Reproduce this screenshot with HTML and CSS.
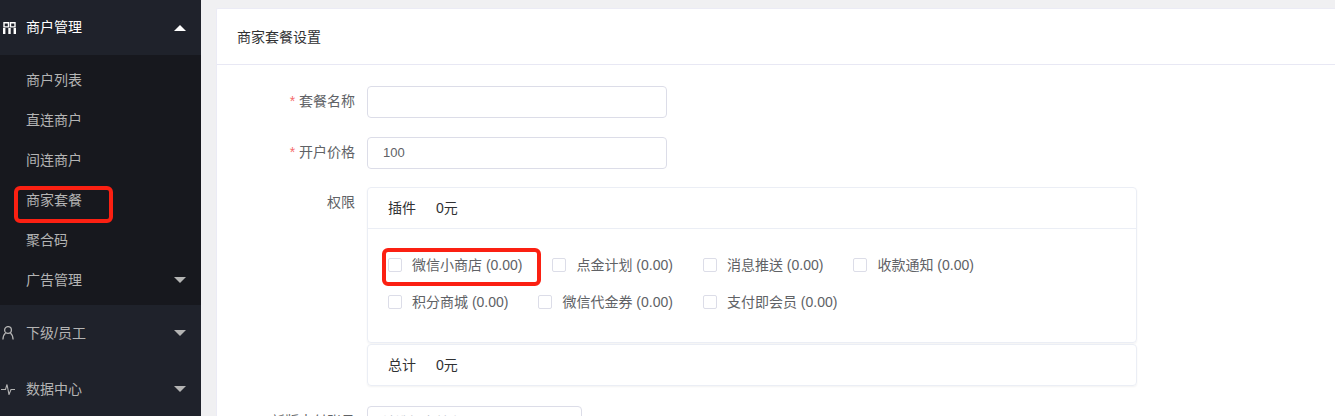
FILE: index.html
```html
<!DOCTYPE html>
<html lang="zh-CN">

<head>
  <meta charset="UTF-8">
  <title>商家套餐设置</title>
  <link rel="stylesheet" href="styles.css">
</head>

<body>
  <div id="sidebar">
    <div class="menu-head open">
      <svg class="menu-icon grid" viewBox="0 0 13 12" width="13" height="12">
        <path d="M1 .7h4.5v4.2H1zM7.5 .7H12v4.2H7.5z" fill="none" stroke="currentColor" stroke-width="1.4" />
        <path d="M1.2 6v6M6.5 6v6M11.8 6v6" fill="none" stroke="currentColor" stroke-width="2.4" />
      </svg>
      <span>商户管理</span>
      <i class="arrow up"></i>
    </div>
    <div class="submenu">
      <div class="menu-item">商户列表</div>
      <div class="menu-item">直连商户</div>
      <div class="menu-item">间连商户</div>
      <div class="menu-item">商家套餐<b class="mark mark-side"></b></div>
      <div class="menu-item">聚合码</div>
      <div class="menu-item">广告管理<i class="arrow"></i></div>
    </div>
    <div class="menu-head tall">
      <svg class="menu-icon person" viewBox="0 0 12 14" width="12" height="14">
        <circle cx="6" cy="4" r="3.4" fill="none" stroke="currentColor" stroke-width="1.3" />
        <path d="M3.6 7C2 8.2 1.1 10.5.9 13.5M8.4 7C10 8.2 10.9 10.5 11.1 13.5" fill="none" stroke="currentColor" stroke-width="1.3" />
      </svg>
      <span>下级/员工</span>
      <i class="arrow"></i>
    </div>
    <div class="menu-head tall">
      <svg class="menu-icon pulse" viewBox="0 0 14 12" width="14" height="12">
        <path d="M0 6.5h4.5L6 1.5 8 11.5 10 6.5h4" fill="none" stroke="currentColor" stroke-width="1.1" />
      </svg>
      <span>数据中心</span>
      <i class="arrow"></i>
    </div>
  </div>

  <div id="main">
    <div id="card">
      <div id="card-title">商家套餐设置</div>
      <form id="setup">
        <div class="row">
          <label class="req">套餐名称</label>
          <input class="text" type="text" />
        </div>
        <div class="row">
          <label class="req">开户价格</label>
          <input class="text" type="text" value="100" />
        </div>
        <div class="row row-perm">
          <label>权限</label>
          <div class="perm">
            <div class="panel">
              <div class="panel-head"><span>插件</span><span>0元</span></div>
              <div class="panel-body">
                <div class="checks">
                  <span class="check">微信小商店 (0.00)<b class="mark mark-check"></b></span>
                  <span class="check">点金计划 (0.00)</span>
                  <span class="check">消息推送 (0.00)</span>
                  <span class="check">收款通知 (0.00)</span>
                </div>
                <div class="checks">
                  <span class="check">积分商城 (0.00)</span>
                  <span class="check">微信代金券 (0.00)</span>
                  <span class="check">支付即会员 (0.00)</span>
                </div>
              </div>
            </div>
            <div class="panel total">
              <div class="panel-head"><span>总计</span><span>0元</span></div>
            </div>
          </div>
        </div>
        <div class="row">
          <label>新版支付账号</label>
          <input class="text short" type="text" placeholder="请选择支付账号" />
        </div>
      </form>
    </div>
  </div>
</body>

</html>
```

FILE: styles.css
```css
html, body {
  margin: 0;
  height: 416px;
  overflow: hidden;
}
body {
  display: flex;
  background-color: #f0f0f2;
  font-family: "Liberation Sans", "Noto Sans CJK SC", sans-serif;
  font-size: 14px;
  color: #606266;
}
#sidebar {
  width: 201px;
  flex-shrink: 0;
  background-color: #1f222b;
  color: #b4b4b4;
}
.menu-head {
  display: flex;
  align-items: center;
  box-sizing: border-box;
  height: 55px;
  padding-bottom: 2px;
  position: relative;
}
.menu-head.open {
  color: white;
  padding-bottom: 4px;
}
.menu-head.tall {
  height: 56px;
}
.menu-icon {
  position: absolute;
  left: 2px;
  top: 50%;
  margin-top: -6px;
}
.menu-icon.grid {
  left: 3px;
}
.menu-icon.person {
  margin-top: -7px;
}
.menu-icon.pulse {
  left: 1px;
}
.menu-head span {
  margin-left: 26px;
}
.submenu {
  background-color: #17181e;
  height: 250px;
  padding-top: 5px;
  box-sizing: border-box;
}
.menu-item {
  display: flex;
  align-items: center;
  box-sizing: border-box;
  height: 40px;
  padding-left: 26px;
  padding-bottom: 2px;
  position: relative;
}
.arrow {
  position: absolute;
  right: 15px;
  top: 50%;
  margin-top: -3px;
  border-left: 6px solid transparent;
  border-right: 6px solid transparent;
  border-top: 6px solid #b4b4b4;
}
.arrow.up {
  border-top: 0;
  border-bottom: 6px solid white;
}
.mark {
  position: absolute;
  border: 4px solid #fb2012;
  border-radius: 6px;
}
.mark-side {
  left: 14px;
  top: 6px;
  width: 91px;
  height: 29px;
}
.mark-check {
  left: -6px;
  top: 1px;
  width: 151px;
  height: 30px;
}
#main {
  flex-grow: 1;
  padding-top: 8px;
  padding-left: 15px;
}
#card {
  background-color: white;
  height: 408px;
  box-sizing: border-box;
  border: 1px solid #ebebf5;
  border-right: 0;
  border-bottom: 0;
  border-radius: 2px 0 0 0;
  overflow: hidden;
}
#card-title {
  box-sizing: border-box;
  height: 56px;
  line-height: 54px;
  padding-top: 1px;
  padding-left: 20px;
  border-bottom: 1px solid #e8e8f4;
  color: #303133;
}
#setup {
  padding-top: 21px;
}
.row {
  display: flex;
  margin-bottom: 19px;
}
.row:nth-child(2) {
  margin-bottom: 18px;
}
.row-perm {
  margin-bottom: 20px;
}
.row label {
  width: 138px;
  margin-right: 12px;
  height: 32px;
  line-height: 30px;
  text-align: right;
}
.req::before {
  content: "* ";
  color: #f56c6c;
}
.text {
  box-sizing: border-box;
  width: 300px;
  height: 32px;
  padding: 0 15px 2px;
  border: 1px solid #dcdde8;
  border-radius: 4px;
  font: inherit;
  font-size: 13px;
  color: #606266;
  outline: none;
}
.text.short {
  width: 215px;
}
.text::placeholder {
  color: #c0c4cc;
}
.perm {
  width: 770px;
}
.panel {
  box-sizing: border-box;
  border: 1px solid #ebeef5;
  border-radius: 4px;
  box-shadow: 0 1px 2px rgba(0, 0, 0, 0.05);
}
.panel-head {
  display: flex;
  gap: 20px;
  height: 40px;
  line-height: 40px;
  padding-left: 20px;
  color: #303133;
}
.panel-body {
  height: 114px;
  box-sizing: border-box;
  border-top: 1px solid #ebeef5;
  padding: 18px 20px 0;
}
.checks {
  display: flex;
  height: 37px;
  align-items: center;
}
.check {
  position: relative;
  padding-left: 24px;
  margin-right: 30px;
  line-height: 37px;
}
.check::before {
  content: "";
  position: absolute;
  left: 0;
  top: 11px;
  width: 12px;
  height: 12px;
  border: 1px solid #dcdde8;
  border-radius: 2px;
}
.total {
  margin-top: 1px;
}
```
